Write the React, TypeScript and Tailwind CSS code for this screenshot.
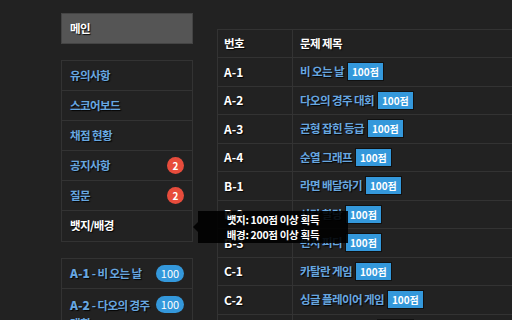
import React from 'react'

const shadow = '[text-shadow:1px_1px_1px_rgba(0,0,0,0.9)]'
const ko = 'text-[11.5px] tracking-[-0.6px]'

const menu = [
  { label: '유의사항' },
  { label: '스코어보드' },
  { label: '채점 현황' },
  { label: '공지사항', badge: 2 },
  { label: '질문', badge: 2 },
]

const problems = [
  { id: 'A-1', title: '비 오는 날' },
  { id: 'A-2', title: '다오의 경주 대회' },
  { id: 'A-3', title: '균형 잡힌 등급' },
  { id: 'A-4', title: '순열 그래프' },
  { id: 'B-1', title: '라면 배달하기' },
  { id: 'B-2', title: '사탕 할당' },
  { id: 'B-3', title: '편지 피디' },
  { id: 'C-1', title: '카탈란 게임' },
  { id: 'C-2', title: '싱글 플레이어 게임' },
  { id: 'C-3', title: '숫자 맞추기 게임' },
]

const App = () => {
  return (
    <div className="w-[512px] h-[320px] overflow-hidden bg-[#222222] font-['Noto_Sans_CJK_KR','Noto_Sans',sans-serif] text-[12px]">
      <div className="flex gap-[24px] pl-[61px] pt-[13px]">
        {/* Sidebar */}
        <div className="w-[132px] shrink-0 flex flex-col">
          <div className={`h-[31px] bg-[#555555] border border-[#444] flex items-center px-[8px] text-white font-bold ${ko} ${shadow}`}>
            메인
          </div>

          <div className="mt-[16px] border border-[#333] flex flex-col">
            {menu.map((m) => (
              <div key={m.label} className="h-[30px] border-b border-[#333] flex items-center justify-between px-[8px]">
                <span className={`text-[#67a7e0] font-bold ${ko} ${shadow}`}>{m.label}</span>
                {m.badge && (
                  <span className="w-[17px] h-[17px] rounded-full bg-[#e74c3c] text-white text-[10px] font-bold flex items-center justify-center">
                    {m.badge}
                  </span>
                )}
              </div>
            ))}
            <div className="relative h-[30px] flex items-center px-[8px]">
              <span className={`text-white font-bold ${ko} ${shadow}`}>뱃지/배경</span>
              {/* Tooltip */}
              <div className="absolute left-[131px] top-[0px] z-10 flex items-center">
                <div className="w-0 h-0 border-y-[5px] border-y-transparent border-r-[5px] border-r-black/90" />
                <div className="w-[150px] h-[32px] bg-black/90 text-white text-[10.5px] leading-[15px] flex flex-col items-center justify-center font-semibold tracking-[-0.3px]">
                  <span>뱃지: 100점 이상 획득</span>
                  <span>배경: 200점 이상 획득</span>
                </div>
              </div>
            </div>
          </div>

          <div className="mt-[16px] border border-[#333] flex flex-col">
            <div className="h-[30px] border-b border-[#333] flex items-center justify-between px-[8px]">
              <span className={`text-[#67a7e0] font-bold ${ko} ${shadow}`}>
                <b className="text-[12px] tracking-normal">A-1</b> - 비 오는 날
              </span>
              <span className="w-[28px] h-[17px] rounded-full bg-[#3498db] text-white text-[11px] flex items-center justify-center">100</span>
            </div>
            <div className="flex items-start justify-between px-[8px] pt-[7px] pb-[6px]">
              <span className={`w-[84px] text-[#67a7e0] font-bold leading-[18px] ${ko} ${shadow}`}>
                <b className="text-[12px] tracking-normal">A-2</b> - 다오의 경주 대회
              </span>
              <span className="w-[28px] h-[17px] rounded-full bg-[#3498db] text-white text-[11px] flex items-center justify-center">100</span>
            </div>
          </div>
        </div>

        {/* Table */}
        <div className="flex-1 pt-[16px]">
          <table className="w-[400px] border-collapse">
            <thead>
              <tr className="h-[28px] border-y border-[#333]">
                <th className={`w-[75px] border-x border-[#333] text-left px-[6px] text-white font-bold ${ko} ${shadow}`}>번호</th>
                <th className={`border-x border-[#333] text-left px-[7px] text-white font-bold ${ko} ${shadow}`}>문제 제목</th>
              </tr>
            </thead>
            <tbody>
              {problems.map((p) => (
                <tr key={p.id} className="h-[28.5px] border-b border-[#333]">
                  <td className={`border-x border-[#333] px-[6px] text-white font-bold ${shadow}`}>{p.id}</td>
                  <td className="border-x border-[#333] px-[7px]">
                    <div className="flex items-center gap-[3px]">
                      <span className={`text-[#67a7e0] font-bold ${ko} ${shadow}`}>{p.title}</span>
                      <span className="h-[19px] px-[4px] bg-[#3498db] border border-[#111] text-white text-[10px] font-bold flex items-center">100점</span>
                    </div>
                  </td>
                </tr>
              ))}
            </tbody>
          </table>
        </div>
      </div>
    </div>
  )
}

export default App
